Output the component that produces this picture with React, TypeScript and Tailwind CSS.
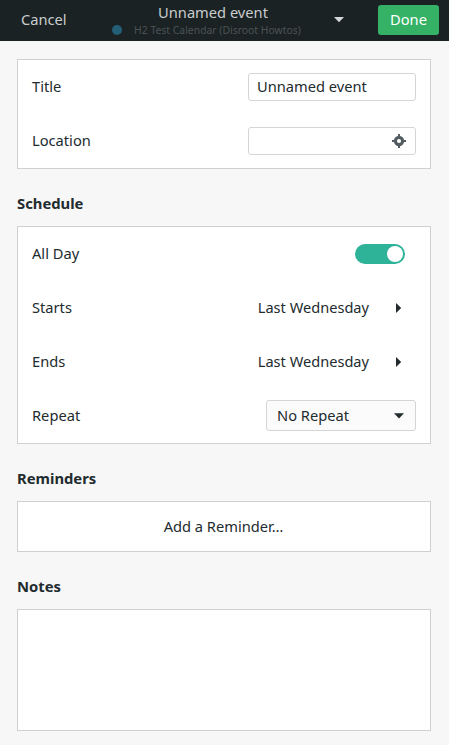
import React from "react";

function Target() {
  return (
    <svg width="14" height="14" viewBox="0 0 14 14" fill="none" stroke="#535c60">
      <circle cx="7" cy="7" r="3.6" strokeWidth="3.1" />
      <path d="M7 0v3M7 11v3M0 7h3M11 7h3" strokeWidth="2" />
    </svg>
  );
}

function Row({ label, children }: { label: string; children: React.ReactNode }) {
  return (
    <div className="flex h-[54px] items-center justify-between pr-[14px] pl-[14px]">
      <span className="pb-[2px]">{label}</span>
      {children}
    </div>
  );
}

function DateValue() {
  return (
    <div className="flex items-center pr-[14px]">
      <span className="mr-[27px] pb-[2px] text-[14.6px]">Last Wednesday</span>
      <svg width="6" height="10" viewBox="0 0 6 10"><path d="M0 0L5.2 5L0 10z" fill="#232a2d" /></svg>
    </div>
  );
}

function Heading({ children }: { children: React.ReactNode }) {
  return <h2 className="mb-[13px] h-[20px] text-[14.8px] leading-[20px] font-bold">{children}</h2>;
}

export default function App() {
  return (
    <div className="h-[745px] w-[449px] overflow-hidden bg-[#f7f7f7] font-['Noto_Sans',sans-serif] text-[14.667px] leading-5 text-[#222b2e]">
      <header className="flex h-[41px] bg-[#1b2224] text-[#c9cdce]">
        <button className="mt-[9px] ml-[21px] h-5 w-[46px] text-left">Cancel</button>
        <div className="ml-[45px] flex w-[189px] flex-col items-center pt-[2px]">
          <div className="ml-[13px] h-5 leading-5">Unnamed event</div>
          <div className="mt-px flex h-[14px] items-center text-[10.4px] leading-[14px] whitespace-nowrap text-[#4b5254]">
            <span className="mr-3 size-[10px] shrink-0 rounded-full bg-[#235f76]" />
            <span>H2 Test Calendar (Disroot Howtos)</span>
          </div>
        </div>
        <svg className="mt-[17px] ml-[33px]" width="10" height="6" viewBox="0 0 10 6"><path d="M0 0h10L5 5.2z" fill="#d4d7d8" /></svg>
        <button className="mt-[5px] ml-[34px] h-[30px] w-[61px] rounded-[3px] bg-[#35b266] pb-[2px] text-white">Done</button>
      </header>
      <main className="pt-[18px] pr-[18px] pl-[17px]">
        <section className="mb-[25px] h-[110px] border border-[#cfd0d0] bg-white">
          <Row label="Title">
            <div className="h-7 w-[168px] rounded-[3px] border border-[#d5d5d5] pl-2 leading-[25px]">Unnamed event</div>
          </Row>
          <Row label="Location">
            <div className="flex h-7 w-[168px] items-center justify-end rounded-[3px] border border-[#d5d5d5] pr-[9px]"><Target /></div>
          </Row>
        </section>
        <div className="-mt-px"><Heading>Schedule</Heading></div>
        <section className="mb-[24px] h-[218px] border border-[#cfd0d0] bg-white">
          <Row label="All Day">
            <div className="mr-[11px] flex h-5 w-[50px] items-center justify-end rounded-full bg-[#2eb398] pr-[2px]">
              <span className="size-4 rounded-full bg-white" />
            </div>
          </Row>
          <Row label="Starts"><DateValue /></Row>
          <Row label="Ends"><DateValue /></Row>
          <Row label="Repeat">
            <div className="mb-px flex h-[31px] w-[150px] items-center justify-between rounded-[3px] border border-[#d5d5d5] bg-[#fbfbfb] pr-[11px] pl-[10px]">
              <span className="pb-px">No Repeat</span>
              <svg width="10" height="6" viewBox="0 0 10 6"><path d="M0 0.3h10L5 5.5z" fill="#232a2d" /></svg>
            </div>
          </Row>
        </section>
        <Heading>Reminders</Heading>
        <section className="mb-[24px] flex h-[51px] items-center justify-center border border-[#cfd0d0] bg-white pr-px pb-[2px]">Add a Reminder…</section>
        <Heading>Notes</Heading>
        <section className="h-[122px] border border-[#cfd0d0] bg-white" />
      </main>
    </div>
  );
}
